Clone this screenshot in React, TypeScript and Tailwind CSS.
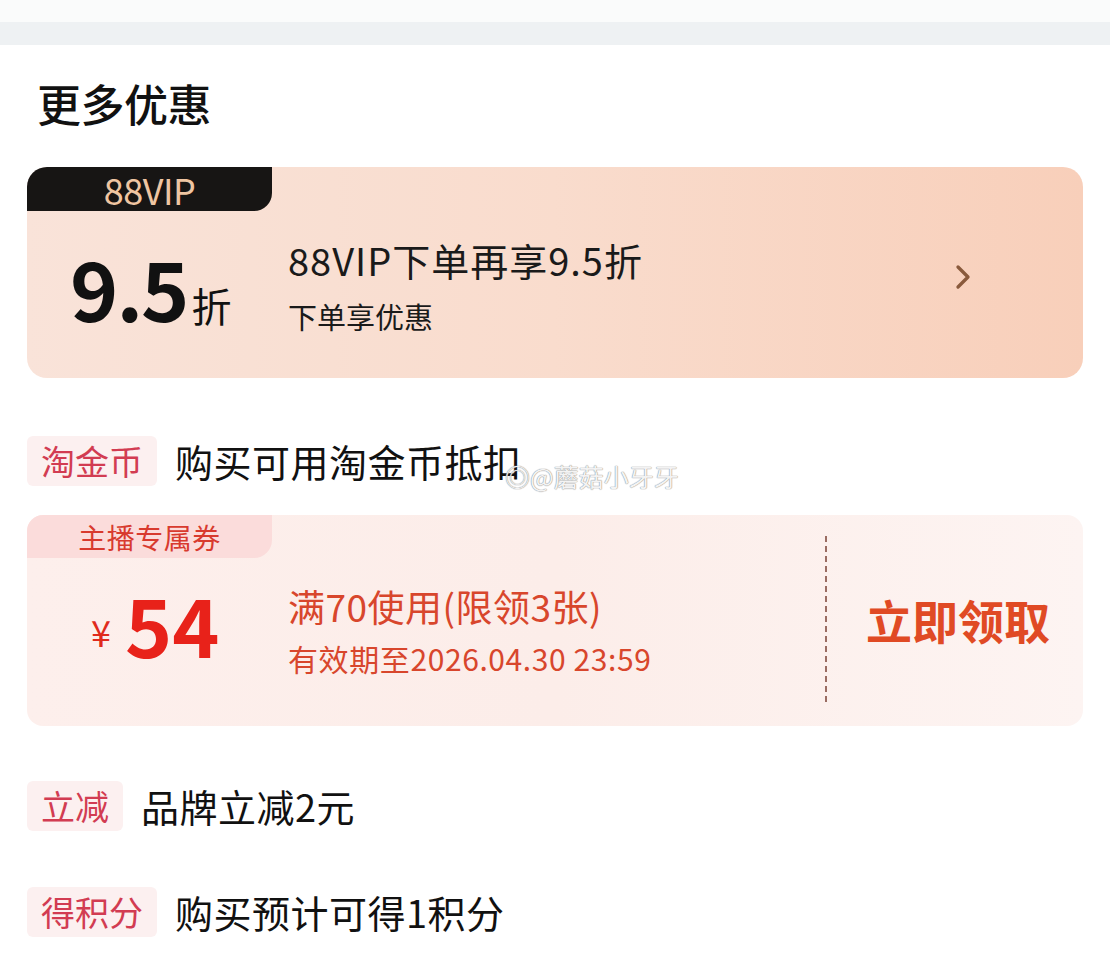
import { ChevronRight } from 'lucide-react';

const font = { fontFamily: '"Noto Sans CJK SC", "Noto Sans", sans-serif' };

const Tag = ({ label }: { label: string }) => (
  <span className="inline-flex h-[50px] items-center rounded-[6px] bg-[#fcf0f0] px-[14px] text-[34px] leading-none text-[#d23c52]">
    {label}
  </span>
);

const Row = ({ tag, text, children }: { tag: string; text: string; children?: React.ReactNode }) => (
  <div className="relative flex items-center">
    <Tag label={tag} />
    <span className="ml-[18px] text-[38px] leading-none tracking-[0.5px]">{text}</span>
    {children}
  </div>
);

export default function App() {
  return (
    <div className="min-h-[960px] w-[1110px] bg-white text-[#111]" style={font}>
      <div className="h-[22px] bg-[#fafbfb]" />
      <div className="h-[23px] bg-[#eef1f3]" />

      <div className="px-[27px]">
        <h2 className="mt-[30px] pl-[10px] text-[44px] font-medium leading-[56px] tracking-[-0.5px]">更多优惠</h2>

        {/* 88VIP card */}
        <div className="mt-[36px] h-[211px] rounded-[20px] bg-gradient-to-r from-[#f9e3d9] via-[#f9dccd] to-[#f8cfba]">
          <div className="flex h-[44px] w-[245px] items-center justify-center rounded-tl-[20px] rounded-br-[18px] bg-[#171514] text-[36px] leading-none tracking-[-0.5px] text-[#efc5a2]">
            88VIP
          </div>
          <div className="flex items-center">
            <div className="flex w-[261px] items-baseline pl-[43px] pt-[26px]">
              <span className="text-[82px] font-bold leading-[100px] tracking-[-2px]">9.5</span>
              <span className="ml-[4px] text-[40px] leading-none">折</span>
            </div>
            <div className="flex-1 pt-[22px]">
              <div className="text-[38px] leading-[46px] tracking-[1px] text-[#1a1a1a]">88VIP下单再享9.5折</div>
              <div className="mt-[16px] text-[29px] leading-[34px] text-[#1a1a1a]">下单享优惠</div>
            </div>
            <ChevronRight className="mr-[100px] mt-[6px] h-[40px] w-[40px] text-[#8a5a3c]" strokeWidth={2} />
          </div>
        </div>

        <div className="mt-[58px]">
          <Row tag="淘金币" text="购买可用淘金币抵扣">
            <span className="absolute left-[478px] top-[28px] text-[25px] leading-none text-white/90 [text-shadow:0_0_1px_#8a8a8a,0_0_1px_#8a8a8a]">
              ◎@蘑菇小牙牙
            </span>
          </Row>
        </div>

        {/* coupon card */}
        <div className="mt-[29px] h-[211px] rounded-[16px] bg-gradient-to-r from-[#fdefec] via-[#fcede9] to-[#fdf4f2]">
          <div className="flex h-[43px] w-[245px] items-center justify-center rounded-tl-[16px] rounded-br-[18px] bg-[#fbdcdb] text-[28px] leading-none tracking-[0.5px] text-[#d83a2e]">
            主播专属券
          </div>
          <div className="flex h-[168px]">
            <div className="flex w-[261px] items-center pb-[38px] pl-[64px]">
              <span className="mt-[16px] text-[36px] leading-none text-[#e02a1c]">¥</span>
              <span className="ml-[14px] text-[80px] font-bold leading-[80px] text-[#e8221a]">54</span>
            </div>
            <div className="flex-1 pt-[26px] text-[#d8462c]">
              <div className="text-[37px] leading-[44px] tracking-[0.5px]">满70使用(限领3张)</div>
              <div className="mt-[12px] text-[30px] leading-[36px] tracking-[0.6px]">有效期至2026.04.30 23:59</div>
            </div>
            <div className="my-[-22px] mb-[24px] border-l-2 border-dashed border-[#9a6c62]" />
            <div className="flex w-[256px] items-center justify-center pb-[46px] pl-[6px] text-[46px] font-bold leading-none text-[#e04a24]">
              立即领取
            </div>
          </div>
        </div>

        <div className="mt-[55px]">
          <Row tag="立减" text="品牌立减2元" />
        </div>

        <div className="mt-[56px]">
          <Row tag="得积分" text="购买预计可得1积分" />
        </div>
      </div>
    </div>
  );
}
